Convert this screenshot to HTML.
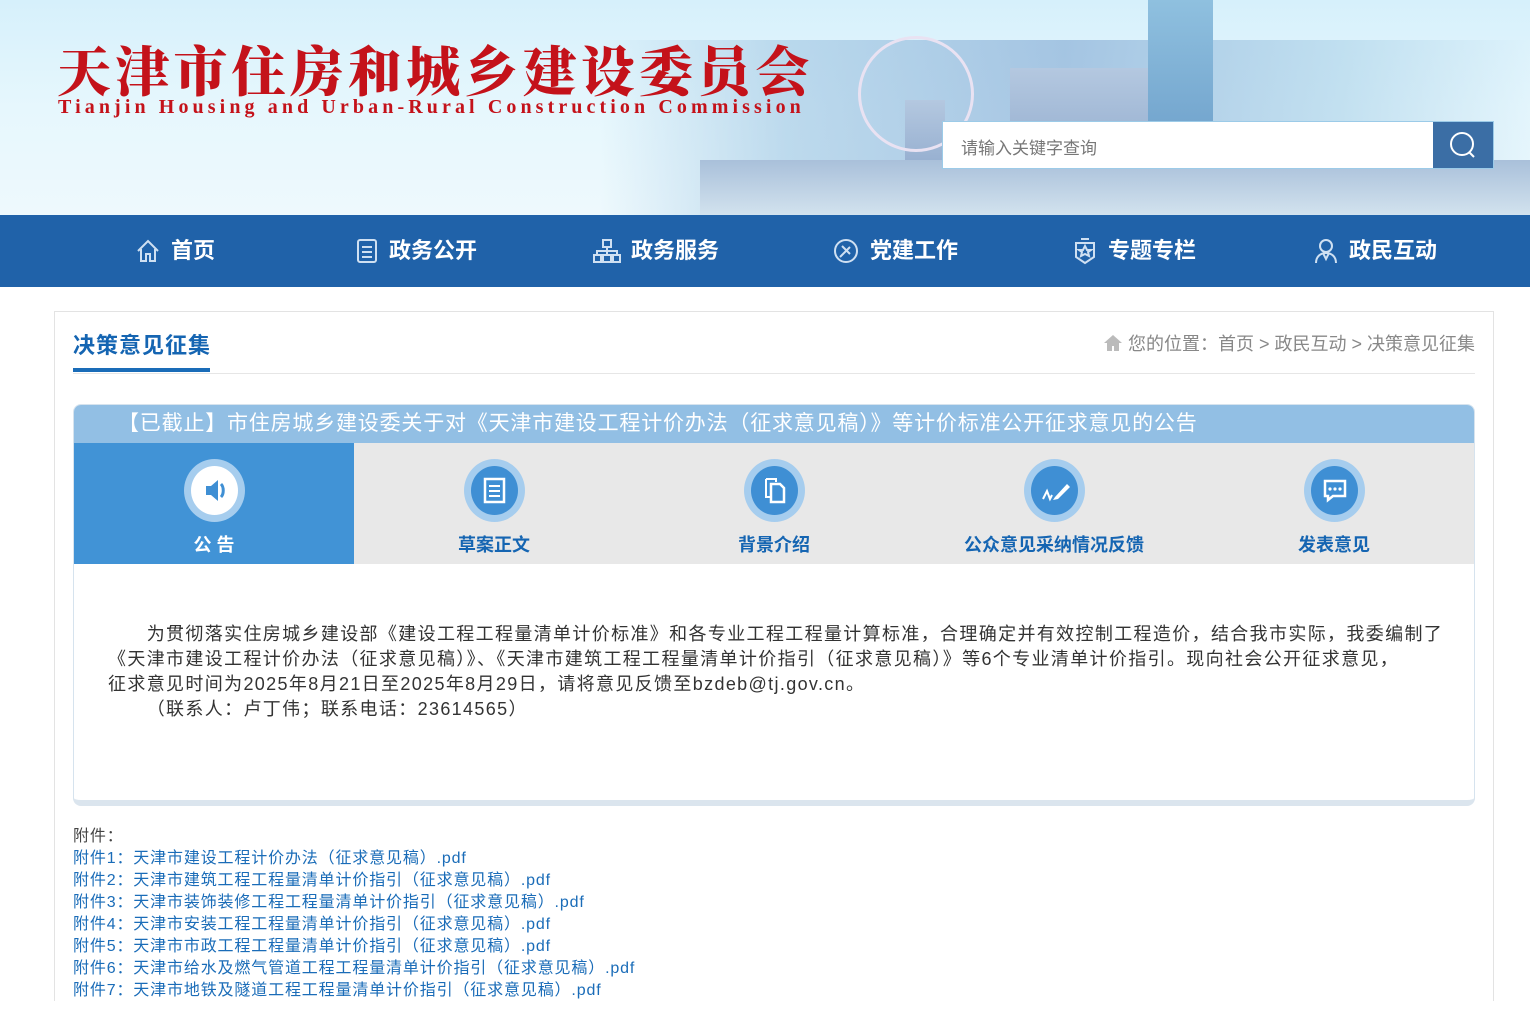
<!DOCTYPE html>
<html><head><meta charset="utf-8">
<style>
*{margin:0;padding:0;box-sizing:border-box}
body{width:1530px;height:1011px;overflow:hidden;background:#fff;font-family:"Liberation Sans","Noto Sans CJK SC",sans-serif;position:relative}
.hdr{position:absolute;left:0;top:0;width:1530px;height:215px;background:linear-gradient(180deg,#d6f0fb 0%,#e6f7fd 50%,#eef9fd 100%);overflow:hidden}
.city{position:absolute;left:600px;top:40px;width:930px;height:175px;background:linear-gradient(90deg,rgba(200,230,245,0) 0%,rgba(170,205,230,.7) 20%,rgba(150,185,220,.8) 50%,rgba(180,215,235,.7) 80%,rgba(220,240,250,.3) 100%)}
.bld{position:absolute;background:linear-gradient(180deg,#b4c8e0,#8fa9cc)}
.water{position:absolute;left:700px;top:160px;width:830px;height:55px;background:linear-gradient(180deg,#a9c0da,#d2e2ee)}
.t1{position:absolute;left:57px;top:30px;font-family:"Noto Serif CJK SC",serif;font-weight:900;font-size:54px;color:#c4121a;letter-spacing:4.2px;white-space:nowrap}
.t2{position:absolute;left:58px;top:96px;font-family:"Liberation Serif",serif;font-weight:bold;font-size:20px;color:#c4121a;letter-spacing:4.1px;white-space:nowrap}
.search{position:absolute;left:942px;top:121px;width:552px;height:48px;border:1px solid #9ccbe8;background:#fff}
.search span{position:absolute;left:18px;top:12px;font-size:17px;color:#777}
.search .btn{position:absolute;right:0;top:0;width:60px;height:46px;background:#3b6ea5}
.nav{position:absolute;left:0;top:215px;width:1530px;height:72px;background:#2062a9}
.nav div{position:absolute;top:0;height:72px;line-height:72px;color:#fff;font-weight:bold;font-size:22px;display:flex;align-items:center;gap:10px}
.box{position:absolute;left:54px;top:311px;width:1440px;height:690px;border:1px solid #e3e3e3;border-bottom:none}
.ttl{position:absolute;left:73px;top:328px;font-size:22px;font-weight:bold;color:#1565b2;letter-spacing:1px}
.ul{position:absolute;left:73px;top:368px;width:137px;height:4px;background:#1a6cb8}
.gl{position:absolute;left:73px;top:373px;width:1402px;height:1px;background:#e6e6e6}
.crumb{position:absolute;right:55px;top:330px;font-size:18px;color:#888}
.panel{position:absolute;left:73px;top:404px;width:1402px;height:402px;border:1px solid #d6e3ee;border-radius:8px;border-bottom:6px solid #dbe5ee;overflow:hidden;background:#fff}
.pt{height:38px;background:#92bfe4;color:#fff;font-size:21px;line-height:38px;padding-left:44px;white-space:nowrap;letter-spacing:0.8px}
.tabs{height:121px;background:#e8e8e8;position:relative}
.tab{position:absolute;top:0;width:280px;height:121px;text-align:center}
.tab.on{background:#4193d6}
.ic{position:absolute;left:110px;top:16px;width:61px;height:63px;border-radius:50%;background:#a6cdee}
.ic i{position:absolute;left:7px;top:7px;width:47px;height:49px;border-radius:50%;background:#3f8fd4;display:block}
.tab.on .ic i{background:#fff}
.ic svg{position:absolute;left:0;top:0}
.tl{position:absolute;left:0;right:0;top:88px;font-size:18px;font-weight:bold;color:#1565b2}
.tab.on .tl{color:#fff}
.body{position:absolute;left:34px;top:217px;width:1380px;font-size:18px;line-height:25px;color:#333;white-space:nowrap;letter-spacing:1.35px}
.att{position:absolute;left:73px;top:826px;font-size:16px;line-height:22px;color:#1a6cb8;letter-spacing:0.85px;white-space:nowrap}
.att .h{color:#444}
</style></head><body>
<div class="hdr">
 <div class="city"></div>
 <div class="bld" style="left:1010px;top:68px;width:140px;height:110px"></div>
 <div class="bld" style="left:1148px;top:0;width:65px;height:175px;background:linear-gradient(180deg,#8fc0df,#6a9cc8)"></div>
 <div class="bld" style="left:905px;top:100px;width:40px;height:80px"></div>
 <div style="position:absolute;left:858px;top:36px;width:116px;height:116px;border-radius:50%;border:3px solid #e9e2f2"></div>
 <div class="water"></div>
 <div class="t1">天津市住房和城乡建设委员会</div>
 <div class="t2">Tianjin Housing and Urban-Rural Construction Commission</div>
 <div class="search"><span>请输入关键字查询</span><div class="btn"><svg width="60" height="46"><circle cx="29" cy="22" r="11" fill="none" stroke="#fff" stroke-width="2"/><path d="M36 30l5 5" stroke="#fff" stroke-width="2"/></svg></div></div>
</div>
<div class="nav">
 <div style="left:135px"><svg width="26" height="26" fill="none" stroke="#cfe0f2" stroke-width="2"><path d="M3 13L13 3l10 10M6 11v12h5v-7h4v7h5V11"/></svg>首页</div>
 <div style="left:355px"><svg width="24" height="26" fill="none" stroke="#cfe0f2" stroke-width="2"><rect x="3" y="2" width="18" height="22" rx="2"/><path d="M7 9h10M7 14h10M7 19h10"/></svg>政务公开</div>
 <div style="left:593px"><svg width="28" height="26" fill="none" stroke="#cfe0f2" stroke-width="2"><rect x="10" y="2" width="8" height="7"/><rect x="1" y="17" width="7" height="7"/><rect x="10" y="17" width="8" height="7"/><rect x="20" y="17" width="7" height="7"/><path d="M14 9v8M4 17v-4h20v4"/></svg>政务服务</div>
 <div style="left:832px"><svg width="28" height="26" fill="none" stroke="#cfe0f2" stroke-width="2"><circle cx="14" cy="13" r="11"/><path d="M8 19l10-10M10 8l8 8"/></svg>党建工作</div>
 <div style="left:1072px"><svg width="26" height="28" fill="none" stroke="#cfe0f2" stroke-width="2"><path d="M9 2h8M4 6h18v14l-9 6-9-6z"/><path d="M13 9l2 4h4l-3 2 1 4-4-2-4 2 1-4-3-2h4z"/></svg>专题专栏</div>
 <div style="left:1313px"><svg width="26" height="28" fill="none" stroke="#cfe0f2" stroke-width="2"><circle cx="13" cy="9" r="6"/><path d="M3 26c0-6 4-10 10-10s10 4 10 10M10 16l3 6 3-6"/></svg>政民互动</div>
</div>
<div class="box"></div>
<div class="ttl">决策意见征集</div>
<div class="ul"></div><div class="gl"></div>
<div class="crumb"><svg width="20" height="18" style="vertical-align:-2px"><path d="M10 1L1 9h3v8h5v-5h2v5h5V9h3z" fill="#bbb"/></svg> 您的位置：首页 &gt; 政民互动 &gt; 决策意见征集</div>
<div class="panel">
 <div class="pt">【已截止】市住房城乡建设委关于对《天津市建设工程计价办法（征求意见稿）》等计价标准公开征求意见的公告</div>
 <div class="tabs">
  <div class="tab on" style="left:0"><div class="ic"><i></i><svg width="61" height="63"><path d="M22 27h5l7-6v21l-7-6h-5z" fill="#3f8fd4"/><path d="M37 25c3 3 3 10 0 13" stroke="#3f8fd4" stroke-width="3" fill="none"/></svg></div><div class="tl">公 告</div></div>
  <div class="tab" style="left:280px"><div class="ic"><i></i><svg width="61" height="63"><rect x="21" y="20" width="19" height="23" fill="none" stroke="#fff" stroke-width="2.5"/><path d="M25 27h11M25 32h11M25 37h11" stroke="#fff" stroke-width="2"/></svg></div><div class="tl">草案正文</div></div>
  <div class="tab" style="left:560px"><div class="ic"><i></i><svg width="61" height="63"><path d="M22 20h10v3M22 20v18h4" fill="none" stroke="#fff" stroke-width="2"/><path d="M27 25h9l4 4v14H27z" fill="none" stroke="#fff" stroke-width="2.5"/></svg></div><div class="tl">背景介绍</div></div>
  <div class="tab" style="left:840px"><div class="ic"><i></i><svg width="61" height="63"><path d="M31 38l12-13 3 3-12 12-5 1z" fill="#fff"/><path d="M19 40l4-8 3 8 2-4" fill="none" stroke="#fff" stroke-width="2"/></svg></div><div class="tl">公众意见采纳情况反馈</div></div>
  <div class="tab" style="left:1120px"><div class="ic"><i></i><svg width="61" height="63"><path d="M21 22h20v15H29l-5 4v-4h-3z" fill="none" stroke="#fff" stroke-width="2.5"/><circle cx="26" cy="30" r="1.6" fill="#fff"/><circle cx="31" cy="30" r="1.6" fill="#fff"/><circle cx="36" cy="30" r="1.6" fill="#fff"/></svg></div><div class="tl">发表意见</div></div>
 </div>
 <div class="body">&emsp;&emsp;为贯彻落实住房城乡建设部《建设工程工程量清单计价标准》和各专业工程工程量计算标准，合理确定并有效控制工程造价，结合我市实际，我委编制了<br>《天津市建设工程计价办法（征求意见稿）》、《天津市建筑工程工程量清单计价指引（征求意见稿）》等6个专业清单计价指引。现向社会公开征求意见，<br>征求意见时间为2025年8月21日至2025年8月29日，请将意见反馈至bzdeb@tj.gov.cn。<br>&emsp;&emsp;（联系人：卢丁伟；联系电话：23614565）</div>
</div>
<div class="att"><div class="h">附件：</div>
附件1：天津市建设工程计价办法（征求意见稿）.pdf<br>
附件2：天津市建筑工程工程量清单计价指引（征求意见稿）.pdf<br>
附件3：天津市装饰装修工程工程量清单计价指引（征求意见稿）.pdf<br>
附件4：天津市安装工程工程量清单计价指引（征求意见稿）.pdf<br>
附件5：天津市市政工程工程量清单计价指引（征求意见稿）.pdf<br>
附件6：天津市给水及燃气管道工程工程量清单计价指引（征求意见稿）.pdf<br>
附件7：天津市地铁及隧道工程工程量清单计价指引（征求意见稿）.pdf</div>
</body></html>
